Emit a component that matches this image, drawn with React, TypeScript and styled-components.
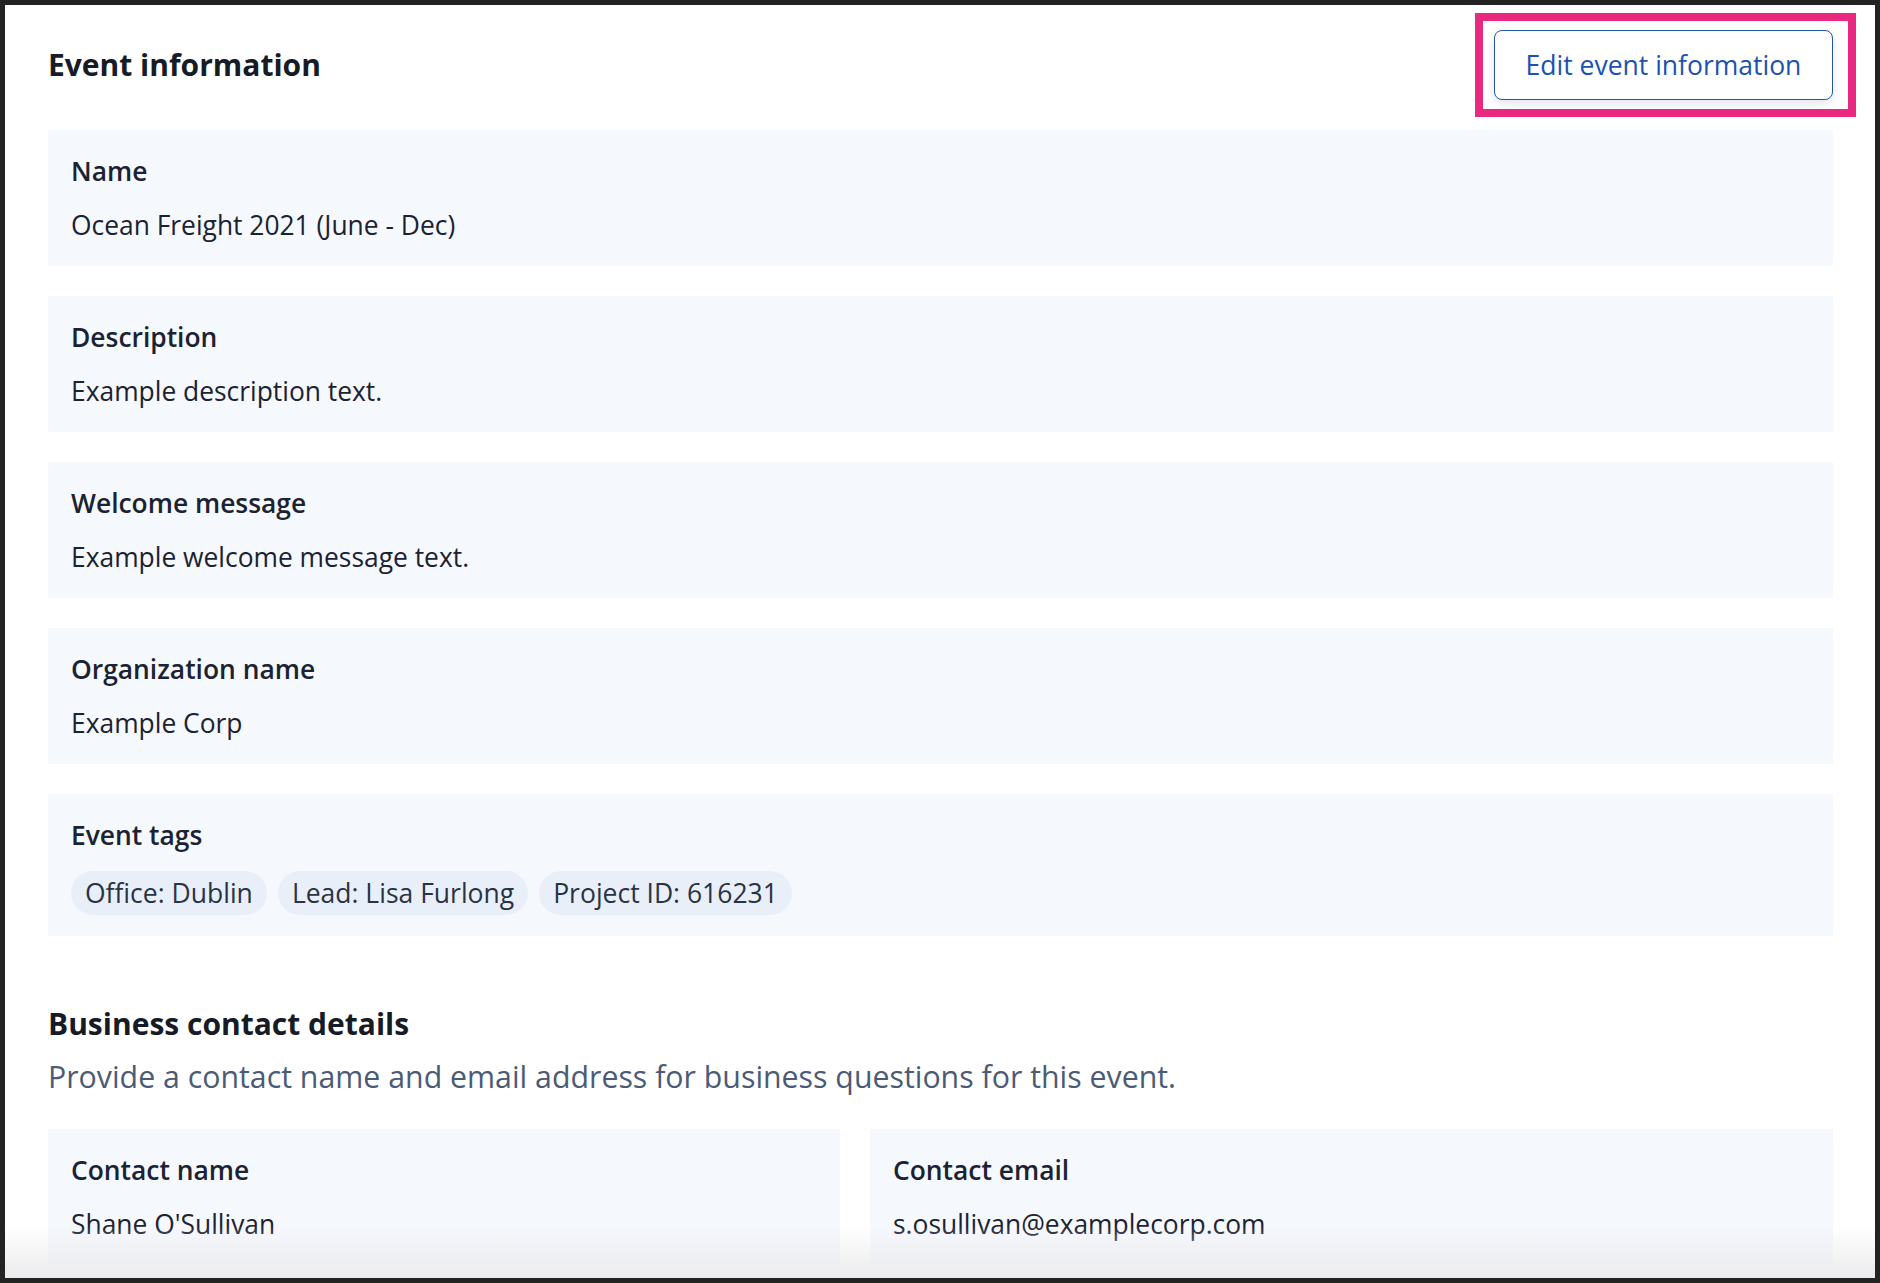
import styled, { createGlobalStyle } from 'styled-components';

const GlobalStyle = createGlobalStyle`
  html, body {
    margin: 0;
    padding: 0;
    background: #ffffff;
  }
  * {
    box-sizing: border-box;
  }
`;

interface FieldProp {
  label: string;
  value: string;
}

const Field = ({ label, value }: FieldProp) => (
  <S.Card>
    <S.Label>{label}</S.Label>
    <S.Value>{value}</S.Value>
  </S.Card>
);

const TAGS = ['Office: Dublin', 'Lead: Lisa Furlong', 'Project ID: 616231'];

const App = () => {
  return (
    <>
      <GlobalStyle />
      <S.Frame>
        <S.Content>
          <S.Header>
            <S.Title>Event information</S.Title>
            <S.Highlight>
              <S.EditButton type="button">Edit event information</S.EditButton>
            </S.Highlight>
          </S.Header>

          <S.Fields>
            <Field label="Name" value="Ocean Freight 2021 (June - Dec)" />
            <Field label="Description" value="Example description text." />
            <Field label="Welcome message" value="Example welcome message text." />
            <Field label="Organization name" value="Example Corp" />
            <S.Card>
              <S.Label>Event tags</S.Label>
              <S.TagList>
                {TAGS.map((tag) => (
                  <S.Tag key={tag}>{tag}</S.Tag>
                ))}
              </S.TagList>
            </S.Card>
          </S.Fields>

          <S.SectionTitle>Business contact details</S.SectionTitle>
          <S.SectionText>
            Provide a contact name and email address for business questions for this event.
          </S.SectionText>

          <S.ContactGrid>
            <Field label="Contact name" value="Shane O'Sullivan" />
            <Field label="Contact email" value="s.osullivan@examplecorp.com" />
          </S.ContactGrid>
        </S.Content>
        <S.Fade />
      </S.Frame>
    </>
  );
};

const S = {
  Frame: styled.div`
    position: relative;
    width: 1880px;
    height: 1283px;
    overflow: hidden;
    border: 5px solid #232323;
    background: #ffffff;
    font-family: 'Open Sans', 'Noto Sans', sans-serif;
    color: #1b2232;
  `,

  Content: styled.div`
    display: flex;
    flex-direction: column;
    padding: 25px 42px 0 43px;
  `,

  Header: styled.div`
    display: flex;
    align-items: center;
    justify-content: space-between;
    height: 70px;
  `,

  Title: styled.h2`
    margin: 0;
    font-size: 30px;
    font-weight: 700;
    line-height: 40px;
    color: #161b26;
  `,

  Highlight: styled.div`
    position: relative;
    &::after {
      content: '';
      position: absolute;
      top: -17px;
      left: -19px;
      right: -23px;
      bottom: -17px;
      border: 8px solid #e8297f;
      pointer-events: none;
    }
  `,

  EditButton: styled.button`
    display: flex;
    align-items: center;
    justify-content: center;
    width: 339px;
    height: 70px;
    padding: 0;
    border: 1.5px solid #2356a8;
    border-radius: 8px;
    background: #ffffff;
    box-shadow: 0 4px 10px rgba(20, 50, 110, 0.12);
    font-family: inherit;
    font-size: 26.5px;
    font-weight: 400;
    color: #1b52b0;
    cursor: pointer;
  `,

  Fields: styled.div`
    display: flex;
    flex-direction: column;
    gap: 30px;
    margin-top: 30px;
  `,

  Card: styled.div`
    display: flex;
    flex-direction: column;
    padding: 24px 23px 21px;
    min-height: 136px;
    background: #f5f8fd;
  `,

  Label: styled.div`
    font-size: 26.4px;
    font-weight: 600;
    line-height: 34px;
    color: #1b2232;
  `,

  Value: styled.div`
    margin-top: 20px;
    font-size: 26.4px;
    font-weight: 400;
    line-height: 34px;
    color: #1b2232;
  `,

  TagList: styled.div`
    display: flex;
    gap: 11px;
    margin-top: 19px;
  `,

  Tag: styled.span`
    display: inline-flex;
    align-items: center;
    height: 44px;
    padding: 0 14px;
    border-radius: 22px;
    background: #e9eff9;
    font-size: 26.5px;
    color: #2a3344;
  `,

  SectionTitle: styled.h3`
    margin: 68px 0 0;
    font-size: 30px;
    font-weight: 700;
    line-height: 40px;
    color: #161b26;
  `,

  SectionText: styled.p`
    margin: 13px 0 0;
    font-size: 30.3px;
    line-height: 40px;
    color: #4b5b75;
  `,

  ContactGrid: styled.div`
    display: grid;
    grid-template-columns: 792px 1fr;
    gap: 30px;
    margin-top: 32px;
  `,

  Fade: styled.div`
    position: absolute;
    left: 0;
    right: 0;
    bottom: 0;
    height: 52px;
    background: linear-gradient(rgba(255, 255, 255, 0), rgba(234, 234, 236, 0.95));
    pointer-events: none;
  `,
};

export default App;
